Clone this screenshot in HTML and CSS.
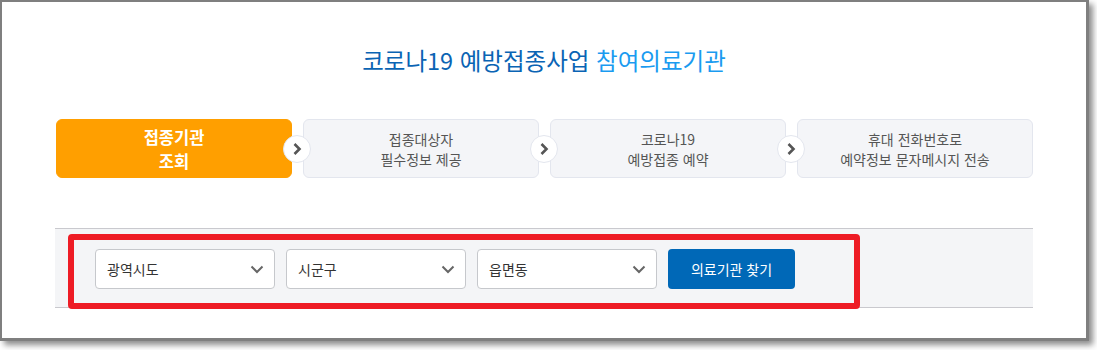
FILE: index.html
```html
<!DOCTYPE html>
<html lang="ko">
<head>
  <meta charset="UTF-8">
  <title>코로나19 예방접종사업 참여의료기관</title>
  <link rel="stylesheet" href="styles.css">
</head>
<body>
  <div class="frame">
    <div class="content">
      <h1 class="title">코로나19 예방접종사업 <span class="title-accent">참여의료기관</span></h1>

      <!-- Steps -->
      <div class="steps">
        <div class="step active">접종기관<br>조회
          <span class="step-arrow"><svg width="10" height="14" viewBox="0 0 10 14"><path d="M2.5 2 L7.5 7 L2.5 12" fill="none" stroke="#555" stroke-width="2.6"/></svg></span>
        </div>
        <div class="step">접종대상자<br>필수정보 제공
          <span class="step-arrow"><svg width="10" height="14" viewBox="0 0 10 14"><path d="M2.5 2 L7.5 7 L2.5 12" fill="none" stroke="#555" stroke-width="2.6"/></svg></span>
        </div>
        <div class="step">코로나19<br>예방접종 예약
          <span class="step-arrow"><svg width="10" height="14" viewBox="0 0 10 14"><path d="M2.5 2 L7.5 7 L2.5 12" fill="none" stroke="#555" stroke-width="2.6"/></svg></span>
        </div>
        <div class="step">휴대 전화번호로<br>예약정보 문자메시지 전송</div>
      </div>

      <!-- Search -->
      <div class="search-panel">
        <div class="highlight">
          <div class="select">
            <span>광역시도</span>
            <svg width="14" height="9" viewBox="0 0 14 9"><path d="M1.5 1.5 L7 7 L12.5 1.5" fill="none" stroke="#666" stroke-width="2"/></svg>
          </div>
          <div class="select">
            <span>시군구</span>
            <svg width="14" height="9" viewBox="0 0 14 9"><path d="M1.5 1.5 L7 7 L12.5 1.5" fill="none" stroke="#666" stroke-width="2"/></svg>
          </div>
          <div class="select">
            <span>읍면동</span>
            <svg width="14" height="9" viewBox="0 0 14 9"><path d="M1.5 1.5 L7 7 L12.5 1.5" fill="none" stroke="#666" stroke-width="2"/></svg>
          </div>
          <button class="search-btn">의료기관 찾기</button>
        </div>
      </div>
    </div>
  </div>
</body>
</html>
```

FILE: styles.css
```css
html, body {
  margin: 0;
  padding: 0;
  width: 100%;
  height: 100%;
  overflow: hidden;
  background: #fff;
}

body {
  font-family: "Noto Sans CJK KR", "Noto Sans", sans-serif;
  color: #333;
}

.frame {
  box-sizing: border-box;
  width: 1089px;
  height: 341px;
  border: 2px solid #7f7f7f;
  border-right-width: 3px;
  border-bottom-width: 3px;
  box-shadow: 4px 4px 6px rgba(0, 0, 0, 0.45);
  background: #fff;
}

.content {
  width: 978px;
  margin: 0 auto;
}

.title {
  margin: 0;
  padding-top: 43px;
  font-size: 23.5px;
  line-height: 30px;
  font-weight: normal;
  text-align: center;
  color: #0a64b4;
}

.title-accent {
  color: #1a9bf0;
}

.steps {
  display: flex;
  gap: 11px;
  margin: 44px 0 0 1px;
}

.step {
  position: relative;
  box-sizing: border-box;
  width: 236px;
  height: 59px;
  display: flex;
  align-items: center;
  justify-content: center;
  text-align: center;
  font-size: 14px;
  line-height: 20px;
  color: #555;
  background: #f4f5f8;
  border: 1px solid #e3e6ee;
  border-radius: 6px;
}

.step.active {
  background: #ff9f00;
  border-color: #ff9f00;
  color: #fff;
  font-weight: bold;
  font-size: 16.5px;
  line-height: 24px;
}

.step-arrow {
  position: absolute;
  right: -20px;
  top: 50%;
  width: 28px;
  height: 28px;
  margin-top: -14px;
  box-sizing: border-box;
  border: 1px solid #e3e6ee;
  border-radius: 50%;
  background: #fff;
  display: flex;
  align-items: center;
  justify-content: center;
  z-index: 1;
}

.search-panel {
  box-sizing: border-box;
  height: 80px;
  margin-top: 50px;
  padding-left: 13px;
  background: #f4f5f7;
  border-top: 1px solid #c9c9ce;
  border-bottom: 1px solid #c9c9ce;
  display: flex;
  align-items: flex-start;
}

.highlight {
  box-sizing: border-box;
  height: 75px;
  margin-top: 5px;
  padding: 9px 59px 0 21px;
  border: 6px solid #ee1c25;
  border-radius: 4px;
  display: flex;
  gap: 11px;
}

.select {
  box-sizing: border-box;
  width: 180px;
  height: 40px;
  padding: 0 10px 0 11px;
  background: #fff;
  border: 1px solid #c6c8cc;
  border-radius: 4px;
  display: flex;
  align-items: center;
  justify-content: space-between;
  font-size: 14px;
  color: #333;
}

.search-btn {
  width: 127px;
  height: 40px;
  border: none;
  border-radius: 4px;
  background: #0068b7;
  color: #fff;
  font-family: inherit;
  font-size: 14px;
  cursor: pointer;
}
```
